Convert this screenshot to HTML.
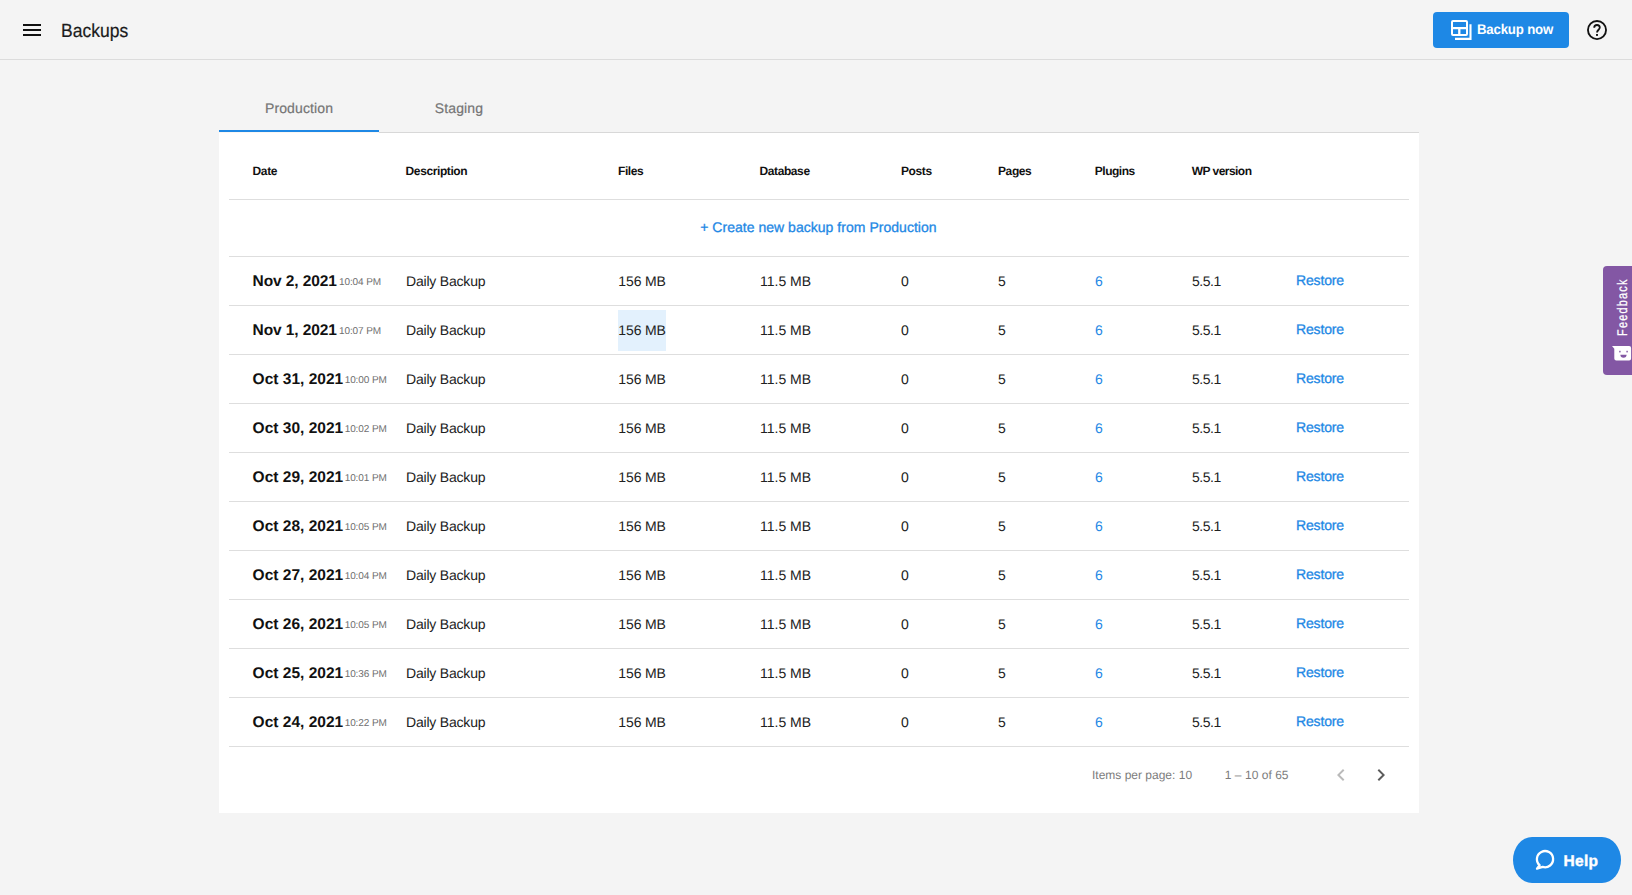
<!DOCTYPE html>
<html lang="en">
<head>
<meta charset="utf-8">
<title>Backups</title>
<style>
*{box-sizing:border-box;margin:0;padding:0}
html,body{width:1632px;height:895px;overflow:hidden;background:#f4f4f4;font-family:"Liberation Sans",sans-serif;color:#212121;text-rendering:geometricPrecision}
body{position:relative}
.abs{position:absolute}
/* header */
#hdr{position:absolute;left:0;top:0;width:1632px;height:60px;border-bottom:1px solid #dcdcdc;background:#f4f4f4}
#burger{position:absolute;left:23px;top:24px;width:18px;height:12px}
#burger i{position:absolute;left:0;width:18px;height:2px;background:#111}
#title{position:absolute;left:60.6px;top:20px;font-size:19px;line-height:24px;color:#1b1b1b;white-space:nowrap;transform-origin:0 50%;transform:scaleX(.922);-webkit-text-stroke:.2px #1b1b1b}
#bkbtn{position:absolute;left:1433px;top:12px;width:136px;height:36px;border-radius:4px;background:#1e88e5;color:#fff}
#bkbtn span{position:absolute;left:44px;top:8px;font-size:14px;line-height:18px;font-weight:bold;white-space:nowrap;letter-spacing:-.2px;transform-origin:0 50%;transform:scaleX(.945)}
#bkbtn svg{position:absolute;left:18px;top:8px}
#helpic{position:absolute;left:1585px;top:18px}
/* tabs */
.tab{position:absolute;top:86px;height:46px;width:160px;text-align:center;font-size:14px;line-height:44px;color:#757575;white-space:nowrap;letter-spacing:.12px;-webkit-text-stroke:.2px #757575}
#tabline{position:absolute;left:379px;top:132px;width:1040px;height:1px;background:#d8d8d8}
#tabline2{position:absolute;left:219px;top:132px;width:160px;height:1px;background:#fbf7f3}
#ink{position:absolute;left:219px;top:130px;width:160px;height:2px;background:#1e88e5}
/* card */
#card{position:absolute;left:219px;top:133px;width:1200px;height:680px;background:#fff}
.hl{position:absolute;left:10px;width:1180px;height:1px;background:#dedede}
.th{position:absolute;top:31px;font-size:12px;line-height:14px;font-weight:bold;color:#111;white-space:nowrap;letter-spacing:-.4px}
#create{position:absolute;left:-.6px;letter-spacing:.03px;top:86px;width:1200px;text-align:center;font-size:14px;line-height:16px;color:#1e88e5;white-space:nowrap;-webkit-text-stroke:.3px #1e88e5}
.row{position:absolute;left:0;width:1200px;height:49px}
.row span{position:absolute;white-space:nowrap;font-size:14px;line-height:16px;top:16px;color:#212121}
.row .d{left:33.6px;font-size:15.5px;font-weight:bold;color:#111;top:16px;line-height:18px;letter-spacing:-.1px}
.row .t{font-size:10px;color:#6e6e6e;top:20px;line-height:12px;letter-spacing:-.1px}
.row .c1{left:187px;letter-spacing:-.2px}
.row .c2{left:399.3px;letter-spacing:-.12px}
.row .c3{left:541px}
.row .c4{left:682px}
.row .c5{left:779px}
.row .c6{left:876px;color:#1e88e5}
.row .c7{left:973px;letter-spacing:-.45px}
.row .c8{left:1077px;color:#1e88e5;top:15px;-webkit-text-stroke:.3px #1e88e5;letter-spacing:-.15px}
#selbox{position:absolute;left:399px;top:177px;width:48px;height:41px;background:#e3f1fd}
.pg{position:absolute;top:635px;font-size:12px;line-height:14px;color:#7c7c7c;white-space:nowrap}
/* floating */
#fb{position:absolute;left:1603px;top:266px;width:33px;height:109px;border-radius:4px 0 0 4px;background:#8357a4}
#fbt{position:absolute;left:0;top:0;height:16px;font-size:14px;line-height:16px;color:#fff;white-space:nowrap;transform-origin:0 0;transform:translate(11px,70px) rotate(-90deg) scaleX(.78);letter-spacing:1.55px;-webkit-text-stroke:.25px #fff}
#fbi{position:absolute;left:8.7px;top:79.5px}
#help{position:absolute;left:1513px;top:837px;width:108px;height:46px;border-radius:19px/23px;background:#1e88e5;color:#fff}
#help span{position:absolute;left:50.4px;top:16px;-webkit-text-stroke:.4px #fff;font-size:15.5px;letter-spacing:.35px;line-height:18px;font-weight:bold}
</style>
</head>
<body>
<div id="hdr">
  <div id="burger"><i style="top:0"></i><i style="top:5px"></i><i style="top:10px"></i></div>
  <div id="title">Backups</div>
  <div id="bkbtn">
    <svg width="22" height="22" viewBox="0 0 22 22" fill="none" stroke="#fff" stroke-width="2"><rect x="1" y="1" width="15" height="14" rx="1"/><path d="M1 8.2h15M8.3 8.2v6.8" stroke-width="2.3"/><path d="M4 18.9h15.5V4.2" stroke-width="2.1"/></svg>
    <span>Backup now</span>
  </div>
  <svg id="helpic" width="24" height="24" viewBox="0 0 24 24"><circle cx="12" cy="12" r="9.05" fill="none" stroke="#111" stroke-width="1.85"/><path d="M9.2 9.8c0-1.7 1.2-2.8 2.8-2.8s2.8 1.1 2.8 2.6c0 2-2.8 2.4-2.8 5" fill="none" stroke="#111" stroke-width="1.8"/><rect x="11.05" y="16" width="1.9" height="1.9" fill="#111"/></svg>
</div>

<div class="tab" style="left:219px">Production</div>
<div class="tab" style="left:379px">Staging</div>
<div id="tabline"></div><div id="tabline2"></div>
<div id="ink"></div>

<div id="card">
  <div class="th" style="left:33.6px">Date</div>
  <div class="th" style="left:186.6px">Description</div>
  <div class="th" style="left:399px">Files</div>
  <div class="th" style="left:540.5px">Database</div>
  <div class="th" style="left:682px">Posts</div>
  <div class="th" style="left:779px">Pages</div>
  <div class="th" style="left:875.8px;letter-spacing:-.5px">Plugins</div>
  <div class="th" style="left:972.8px;letter-spacing:-.55px">WP version</div>
  <div class="hl" style="top:66px"></div>
  <div id="create">+ Create new backup from Production</div>
  <div class="hl" style="top:123px"></div>
  <div id="selbox"></div>
  <div class="row" style="top:124px"><span class="d">Nov 2, 2021</span><span class="t" style="left:120px">10:04 PM</span><span class="c1">Daily Backup</span><span class="c2">156 MB</span><span class="c3">11.5 MB</span><span class="c4">0</span><span class="c5">5</span><span class="c6">6</span><span class="c7">5.5.1</span><span class="c8">Restore</span></div>
  <div class="hl" style="top:172px"></div>
  <div class="row" style="top:173px"><span class="d">Nov 1, 2021</span><span class="t" style="left:120px">10:07 PM</span><span class="c1">Daily Backup</span><span class="c2">156 MB</span><span class="c3">11.5 MB</span><span class="c4">0</span><span class="c5">5</span><span class="c6">6</span><span class="c7">5.5.1</span><span class="c8">Restore</span></div>
  <div class="hl" style="top:221px"></div>
  <div class="row" style="top:222px"><span class="d" style="letter-spacing:.01px">Oct 31, 2021</span><span class="t" style="left:125.7px">10:00 PM</span><span class="c1">Daily Backup</span><span class="c2">156 MB</span><span class="c3">11.5 MB</span><span class="c4">0</span><span class="c5">5</span><span class="c6">6</span><span class="c7">5.5.1</span><span class="c8">Restore</span></div>
  <div class="hl" style="top:270px"></div>
  <div class="row" style="top:271px"><span class="d" style="letter-spacing:.01px">Oct 30, 2021</span><span class="t" style="left:125.7px">10:02 PM</span><span class="c1">Daily Backup</span><span class="c2">156 MB</span><span class="c3">11.5 MB</span><span class="c4">0</span><span class="c5">5</span><span class="c6">6</span><span class="c7">5.5.1</span><span class="c8">Restore</span></div>
  <div class="hl" style="top:319px"></div>
  <div class="row" style="top:320px"><span class="d" style="letter-spacing:.01px">Oct 29, 2021</span><span class="t" style="left:125.7px">10:01 PM</span><span class="c1">Daily Backup</span><span class="c2">156 MB</span><span class="c3">11.5 MB</span><span class="c4">0</span><span class="c5">5</span><span class="c6">6</span><span class="c7">5.5.1</span><span class="c8">Restore</span></div>
  <div class="hl" style="top:368px"></div>
  <div class="row" style="top:369px"><span class="d" style="letter-spacing:.01px">Oct 28, 2021</span><span class="t" style="left:125.7px">10:05 PM</span><span class="c1">Daily Backup</span><span class="c2">156 MB</span><span class="c3">11.5 MB</span><span class="c4">0</span><span class="c5">5</span><span class="c6">6</span><span class="c7">5.5.1</span><span class="c8">Restore</span></div>
  <div class="hl" style="top:417px"></div>
  <div class="row" style="top:418px"><span class="d" style="letter-spacing:.01px">Oct 27, 2021</span><span class="t" style="left:125.7px">10:04 PM</span><span class="c1">Daily Backup</span><span class="c2">156 MB</span><span class="c3">11.5 MB</span><span class="c4">0</span><span class="c5">5</span><span class="c6">6</span><span class="c7">5.5.1</span><span class="c8">Restore</span></div>
  <div class="hl" style="top:466px"></div>
  <div class="row" style="top:467px"><span class="d" style="letter-spacing:.01px">Oct 26, 2021</span><span class="t" style="left:125.7px">10:05 PM</span><span class="c1">Daily Backup</span><span class="c2">156 MB</span><span class="c3">11.5 MB</span><span class="c4">0</span><span class="c5">5</span><span class="c6">6</span><span class="c7">5.5.1</span><span class="c8">Restore</span></div>
  <div class="hl" style="top:515px"></div>
  <div class="row" style="top:516px"><span class="d" style="letter-spacing:.01px">Oct 25, 2021</span><span class="t" style="left:125.7px">10:36 PM</span><span class="c1">Daily Backup</span><span class="c2">156 MB</span><span class="c3">11.5 MB</span><span class="c4">0</span><span class="c5">5</span><span class="c6">6</span><span class="c7">5.5.1</span><span class="c8">Restore</span></div>
  <div class="hl" style="top:564px"></div>
  <div class="row" style="top:565px"><span class="d" style="letter-spacing:.01px">Oct 24, 2021</span><span class="t" style="left:125.7px">10:22 PM</span><span class="c1">Daily Backup</span><span class="c2">156 MB</span><span class="c3">11.5 MB</span><span class="c4">0</span><span class="c5">5</span><span class="c6">6</span><span class="c7">5.5.1</span><span class="c8">Restore</span></div>
  <div class="hl" style="top:613px"></div>
  <div class="pg" style="left:873px">Items per page: 10</div>
  <div class="pg" style="left:1005.8px;letter-spacing:.03px">1 – 10 of 65</div>
  <svg class="abs" style="left:1110px;top:630px" width="24" height="24" viewBox="0 0 24 24"><path d="M15.4 7.4L14 6l-6 6 6 6 1.4-1.4L10.8 12z" fill="#bababa"/></svg>
  <svg class="abs" style="left:1150px;top:630px" width="24" height="24" viewBox="0 0 24 24"><path d="M8.6 16.6L10 18l6-6-6-6-1.4 1.4L13.2 12z" fill="#5c5c5c"/></svg>
</div>

<div id="fb">
  <div id="fbt">Feedback</div>
  <svg id="fbi" width="20" height="15" viewBox="0 0 20 15"><path d="M0 0h17.1a2 2 0 0 1 2 2v10.5a2 2 0 0 1-2 2H4.3a2 2 0 0 1-2-2V2.8z" fill="#fff"/><rect x="7.2" y="4.8" width="1.4" height="1.6" fill="#8357a4"/><rect x="14.4" y="4.8" width="1.4" height="1.6" fill="#8357a4"/><path d="M8.4 8.8h6.2a3.1 3 0 0 1-6.2 0z" fill="#8357a4"/></svg>
</div>
<div id="help">
  <svg width="24" height="24" viewBox="0 0 24 24" style="position:absolute;left:20px;top:10px" fill="none" stroke="#fff" stroke-width="2.3" stroke-linecap="round" stroke-linejoin="round"><path d="M6.6 18.2A8.1 8.1 0 1 1 9.6 19.9L4 21.6z"/></svg>
  <span>Help</span>
</div>
</body>
</html>
